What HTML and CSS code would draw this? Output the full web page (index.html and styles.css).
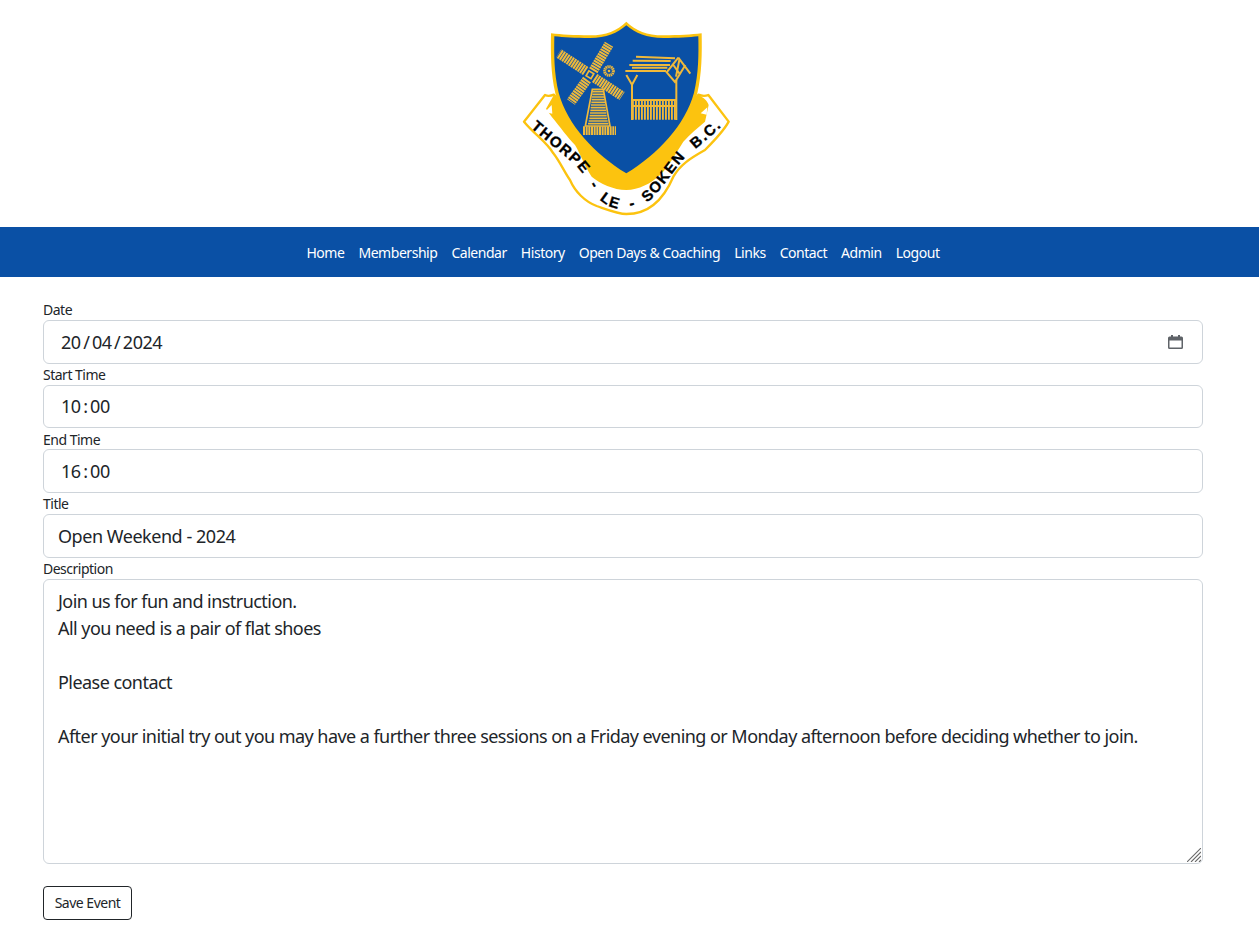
FILE: index.html
```html
<!DOCTYPE html>
<html lang="en">
<head>
<meta charset="utf-8">
<title>Edit Event - Thorpe-le-Soken B.C.</title>
<link rel="stylesheet" href="styles.css">
</head>
<body>
<header class="masthead">
  <svg class="crest" viewBox="0 0 690 645" role="img" aria-label="Thorpe-le-Soken Bowls Club crest">
    <defs>
      <path id="ribbon-text" d="M55 347 C110 395 165 435 206 476 C228 500 240 535 270 570 C290 590 325 603 362 596 C390 590 410 580 418 572 C450 545 485 490 519 450 C550 420 600 385 660 325"/>
    </defs>
    <g class="crest-art">
      <path class="ribbon" d="M42 335 L105 255 C113 259 122 258 132 254 L170 300 L530 300 L565 254 C575 258 585 259 595 255 L656 335 C640 365 610 395 585 420 C540 445 510 465 490 500 C475 535 455 565 430 585 C405 605 375 612 349 612 C325 612 295 600 260 588 C225 575 195 545 180 510 C165 490 150 455 130 430 C110 395 75 375 42 335 Z"/>
      <path class="gold" d="M132 254 L200 320 L500 320 L565 254 C580 262 592 272 596 285 L585 335 C565 352 540 372 520 395 C500 425 480 465 450 495 C425 520 385 540 349 540 C310 540 270 520 245 500 C225 470 210 430 195 405 C175 385 150 350 125 320 L108 296 Z"/>
      <path class="white" d="M105 306 L125 285 L127 311 Z M592 292 L572 310 L590 314 Z"/>
      <path class="gold" d="M349 35 C320 62 290 76 240 76 C190 76 155 74 123 70 C122 130 122 190 136 250 C163 350 250 440 349 497 C448 440 535 350 562 250 C576 190 576 130 575 70 C543 74 510 76 460 76 C410 76 378 62 349 35 Z"/>
      <path class="blue" d="M349 46 C322 70 290 84 240 84 C195 84 160 82 133 79 C132 135 132 190 146 248 C172 345 255 432 349 490 C443 432 526 345 552 248 C566 190 566 135 565 79 C538 82 505 84 460 84 C410 84 376 70 349 46 Z"/>
      <g class="mill">
        <line class="sail" x1="250" y1="182" x2="297" y2="103"/>
        <line class="sail" x1="227" y1="183" x2="146" y2="130"/>
        <line class="sail" x1="231" y1="209" x2="183" y2="276"/>
        <line class="sail" x1="254" y1="204" x2="336" y2="258"/>
        <rect class="hub" x="231" y="186" width="17" height="17" transform="rotate(30 240 195)"/>
        <path class="tower" d="M247 238 L280 238 L300 348 L226 348 Z"/>
        <path class="tower-stripes" d="M247 245H281M247 253H282M246 261H283M245 269H284M244 277H285M243 285H286M242 293H287M241 301H288M240 309H289M239 317H290M238 325H291M236 333H293M234 341H295"/>
        <line class="base" x1="219" y1="362" x2="318" y2="362"/>
        <circle class="cog" cx="297" cy="183" r="13"/>
        <circle class="cog-eye" cx="297" cy="183" r="4"/>
      </g>
      <g class="well">
        <path class="well-line" d="M378 140 L495 145 M368 152 L482 153 M358 165 L480 165 M366 173 L472 173 M346 183 L468 183"/>
        <path class="well-line" d="M349 195 L366 224 L382 195 M366 224 V330 M499 210 V330 M366 270 H499 M366 288 H499"/>
        <path class="well-line" d="M505 143 L470 187 L495 216 L526 165 M505 143 L541 191 M490 165 L508 190 M498 200 L508 150"/>
        <line class="fence" x1="366" y1="298" x2="500" y2="298"/>
      </g>
    </g>
    <text class="ribbon-label"><textPath href="#ribbon-text" startOffset="8">THORPE - LE - SOKEN B.C.</textPath></text>
  </svg>
</header>

<nav class="mainnav">
  <a href="#">Home</a>
  <a href="#">Membership</a>
  <a href="#">Calendar</a>
  <a href="#">History</a>
  <a href="#">Open Days &amp; Coaching</a>
  <a href="#">Links</a>
  <a href="#">Contact</a>
  <a href="#">Admin</a>
  <a href="#">Logout</a>
</nav>

<main class="content">
  <form class="event-form">
    <div class="field">
      <span class="label">Date</span>
      <div class="control control-date">
        <span class="segments"><span>20</span><i>/</i><span>04</span><i>/</i><span>2024</span></span>
        <svg class="calendar" viewBox="0 0 15 14" aria-hidden="true"><path d="M3 0h2v1.5h5V0h2v1.5h1.5A1.5 1.5 0 0 1 15 3v9.5a1.5 1.5 0 0 1-1.5 1.5h-12A1.5 1.5 0 0 1 0 12.500V3a1.500 1.500 0 0 1 1.500-1.500H3zM1.500 5.500v7h12v-7z"/></svg>
      </div>
    </div>
    <div class="field">
      <span class="label">Start Time</span>
      <div class="control control-time"><span class="segments"><span>10</span><i>:</i><span>00</span></span></div>
    </div>
    <div class="field">
      <span class="label">End Time</span>
      <div class="control control-time"><span class="segments"><span>16</span><i>:</i><span>00</span></span></div>
    </div>
    <div class="field">
      <label class="label" for="title">Title</label>
      <input class="control control-line" id="title" type="text" value="Open Weekend - 2024">
    </div>
    <div class="field">
      <label class="label" for="description">Description</label>
      <div class="area-wrap">
        <textarea class="control control-area" id="description">Join us for fun and instruction.
All you need is a pair of flat shoes

Please contact

After your initial try out you may have a further three sessions on a Friday evening or Monday afternoon before deciding whether to join.</textarea>
        <svg class="grip" viewBox="0 0 14 14" aria-hidden="true"><path d="M14 0L0 14M14 4L4 14M14 8L8 14M14 12L12 14"/></svg>
      </div>
    </div>
    <button class="save" type="button">Save Event</button>
  </form>
</main>
</body>
</html>
```

FILE: styles.css
```css
* { box-sizing: border-box; }

html, body { margin: 0; padding: 0; }

body {
  background: #fff;
  color: #212529;
  font-family: "Noto Sans", "Open Sans", sans-serif;
  font-size: 14px;
  line-height: 21px;
}

.masthead {
  display: flex;
  justify-content: center;
  height: 227px;
  padding: 10px 9px 2px 0;
}

.crest { width: 230px; height: 215px; display: block; }
.crest-art { filter: blur(0.35px); }

.white { fill: #fff; }
.gold { fill: #fcc30f; }
.blue { fill: #0a50a5; }
.ribbon { fill: #fff; stroke: #fcc30f; stroke-width: 7; stroke-linejoin: round; }

.sail { stroke: #f0b93a; stroke-width: 29; stroke-dasharray: 6 2; fill: none; }
.hub { fill: #0a50a5; stroke: #f0b93a; stroke-width: 5; }
.tower { fill: none; stroke: #f0b93a; stroke-width: 5; }
.tower-stripes { stroke: #f0b93a; stroke-width: 5; fill: none; }
.base { stroke: #f0b93a; stroke-width: 26; stroke-dasharray: 6 2; }
.cog { fill: none; stroke: #f0b93a; stroke-width: 9; stroke-dasharray: 4 1.500; }
.cog-eye { fill: #f0b93a; }
.well-line { stroke: #f0b93a; stroke-width: 6; fill: none; }
.fence { stroke: #f0b93a; stroke-width: 62; stroke-dasharray: 5.500 3.500; }

.ribbon-label {
  font-family: "Liberation Sans", sans-serif;
  font-weight: 700;
  font-size: 45px;
  letter-spacing: 4.5px;
  word-spacing: 17px;
  fill: #000;
  stroke: #000;
  stroke-width: 1px;
}

.mainnav {
  display: flex;
  justify-content: center;
  align-items: center;
  height: 50px;
  padding-right: 13px;
  background: #0a50a5;
}

.mainnav a {
  padding: 0 7px;
  color: #fff;
  text-decoration: none;
  letter-spacing: -0.46px;
}

.content { padding: 22px 56px 0 43px; }

.event-form { display: flex; flex-direction: column; }

.field { display: flex; flex-direction: column; }

.label {
  display: block;
  height: 21px;
  padding-top: 0.4px;
  letter-spacing: -0.5px;
}

.control {
  display: block;
  width: 100%;
  height: 43.67px;
  padding: 0 14px;
  border: 1px solid #ced4da;
  border-radius: 6px;
  background: #fff;
  color: #212529;
  font: 18px/27px "Noto Sans", "Open Sans", sans-serif;
  letter-spacing: -0.46px;
}

.control-line { padding-top: 1px; }

.control-date, .control-time {
  display: flex;
  align-items: center;
  justify-content: space-between;
  padding-top: 1px;
  padding-left: 17px;
}

.segments { display: inline-flex; }
.segments i { font-style: normal; padding: 0 2.500px; }

.calendar { width: 15px; height: 14px; fill: #5f6368; margin-right: 5px; }

.area-wrap { position: relative; }

.control-area {
  height: 285px;
  padding: 8px 14px;
  resize: none;
  overflow: auto;
  letter-spacing: -0.545px;
}

.grip {
  position: absolute;
  right: 2px;
  bottom: 2px;
  width: 14px;
  height: 14px;
  stroke: #6a6a6a;
  stroke-width: 1.100;
  pointer-events: none;
}

.save {
  align-self: flex-start;
  margin-top: 22px;
  width: 89px;
  height: 34px;
  padding: 0;
  border: 1px solid #212529;
  border-radius: 4px;
  background: #fff;
  color: #212529;
  font: 14px/21px "Noto Sans", "Open Sans", sans-serif;
  letter-spacing: -0.5px;
}
```
